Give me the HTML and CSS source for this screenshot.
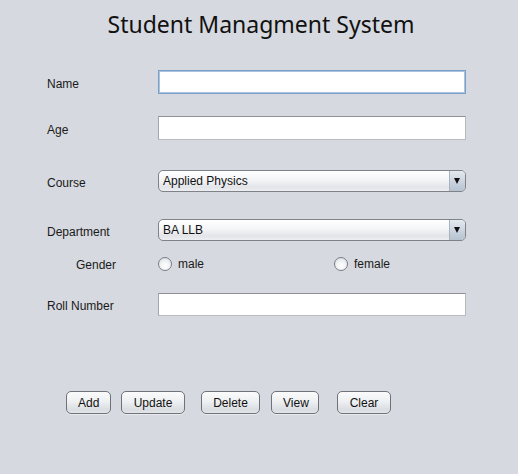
FILE: index.html
```html
<!DOCTYPE html>
<html>
<head>
<meta charset="utf-8">
<link rel="stylesheet" href="styles.css">
</head>
<body>
<div class="window">
  <h1 class="title">Student Managment System</h1>
  <div class="form">
    <div class="row row-name">
      <label class="lbl">Name</label>
      <div class="field field-focus"></div>
    </div>
    <div class="row row-age">
      <label class="lbl">Age</label>
      <div class="field"></div>
    </div>
    <div class="row row-course">
      <label class="lbl">Course</label>
      <div class="combo"><span class="combo-text">Applied Physics</span><span class="combo-btn"><span class="tri"></span></span></div>
    </div>
    <div class="row row-dept">
      <label class="lbl">Department</label>
      <div class="combo"><span class="combo-text">BA LLB</span><span class="combo-btn"><span class="tri"></span></span></div>
    </div>
    <div class="row row-gender">
      <label class="lbl lbl-gender">Gender</label>
      <div class="radios">
        <span class="radio-opt"><span class="radio"></span>male</span>
        <span class="radio-opt"><span class="radio"></span>female</span>
      </div>
    </div>
    <div class="row row-roll">
      <label class="lbl">Roll Number</label>
      <div class="field field-roll"></div>
    </div>
  </div>
  <div class="buttons">
    <button class="btn btn-add">Add</button>
    <button class="btn btn-update">Update</button>
    <button class="btn btn-delete">Delete</button>
    <button class="btn btn-view">View</button>
    <button class="btn btn-clear">Clear</button>
  </div>
</div>
</body>
</html>
```
FILE: styles.css
```css
html, body {
  margin: 0;
  padding: 0;
  background: #d6d9df;
}
.window {
  width: 518px;
  height: 474px;
  background: #d6d9df;
  font-family: "Liberation Sans", Arial, sans-serif;
  font-size: 12px;
  color: #1a1a1a;
  display: flex;
  flex-direction: column;
}
.title {
  margin: 0;
  padding-top: 10px;
  height: 28px;
  line-height: 28px;
  font-family: "Noto Sans", "Open Sans", sans-serif;
  font-weight: normal;
  font-size: 23px;
  color: #111;
  text-align: center;
  padding-left: 4px;
}
.form {
  display: flex;
  flex-direction: column;
  padding-left: 47px;
}
.row {
  display: flex;
  align-items: center;
}
.lbl {
  width: 111px;
  flex: none;
  padding-top: 3px;
}
.lbl-gender {
  padding-left: 29px;
  width: 82px;
  padding-top: 2px;
}
.row-name { margin-top: 32px; height: 24px; }
.row-age { margin-top: 22px; height: 24px; }
.row-course { margin-top: 30px; height: 22px; }
.row-dept { margin-top: 27px; height: 22px; }
.row-gender { margin-top: 16px; height: 14px; }
.row-roll { margin-top: 22px; height: 23px; }

.field {
  box-sizing: border-box;
  width: 308px;
  height: 24px;
  background: #fff;
  border: 1px solid #b8bbbf;
  border-top-color: #8e9195;
  border-left-color: #a3a6aa;
}
.field-roll { height: 23px; }
.field-focus {
  border: 1px solid #7c9fc9;
  box-shadow: inset 0 0 0 1px #aac3e0;
}
.combo {
  box-sizing: border-box;
  width: 308px;
  height: 22px;
  border: 1px solid #7f8389;
  border-radius: 5px;
  background: linear-gradient(#ffffff 0%, #f4f5f7 45%, #e2e4e8 80%, #eceef1 100%);
  display: flex;
  align-items: center;
  overflow: hidden;
}
.combo-text {
  flex: 1;
  padding-left: 4px;
  font-size: 12px;
  color: #111;
}
.combo-btn {
  width: 15px;
  height: 100%;
  border-left: 1px solid #a9b2bd;
  background: linear-gradient(#e4e9ef 0%, #ccd5e0 50%, #b7c3d1 100%);
  display: flex;
  align-items: center;
  justify-content: center;
}
.tri {
  width: 0;
  height: 0;
  border-left: 3px solid transparent;
  border-right: 3px solid transparent;
  border-top: 6px solid #111;
  margin-left: -1px;
}
.radios {
  display: flex;
  align-items: center;
}
.radio-opt {
  width: 176px;
  display: flex;
  align-items: center;
  font-size: 12px;
}
.radio {
  box-sizing: border-box;
  width: 14px;
  height: 14px;
  border-radius: 50%;
  border: 1px solid #7b7f85;
  background: radial-gradient(circle at 50% 65%, #ffffff 0%, #f2f3f5 45%, #d2d6dc 100%);
  margin-right: 6px;
}
.buttons {
  display: flex;
  padding-left: 66px;
  margin-top: 75px;
}
.btn {
  box-sizing: border-box;
  height: 23px;
  padding: 0 11px;
  font-family: "Liberation Sans", Arial, sans-serif;
  font-size: 12px;
  color: #111;
  border: 1px solid #6f7379;
  border-radius: 5px;
  background: linear-gradient(#fbfbfc 0%, #eef0f2 45%, #dadde1 85%, #e4e6e9 100%);
  box-shadow: 0 1px 0 rgba(255,255,255,0.5);
}
.btn-add { width: 45px; }
.btn-update { width: 64px; margin-left: 10px; }
.btn-delete { width: 59px; margin-left: 16px; }
.btn-view { width: 48px; margin-left: 11px; }
.btn-clear { width: 54px; margin-left: 18px; }
```
